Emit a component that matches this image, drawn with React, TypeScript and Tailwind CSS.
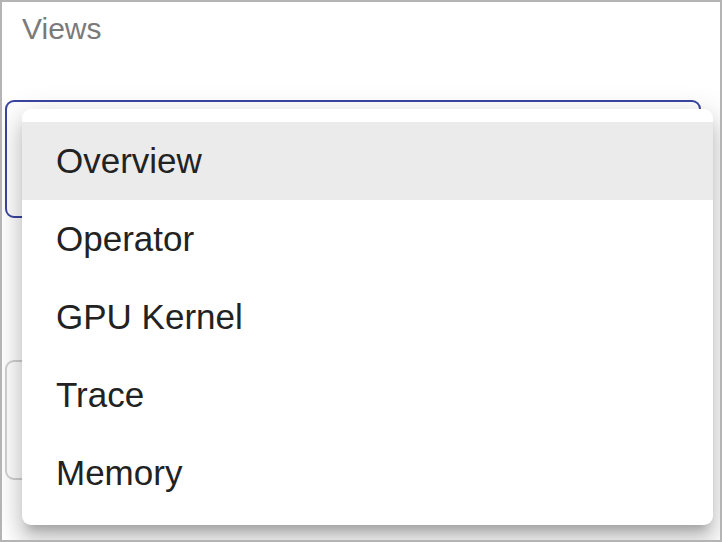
const views = ['Overview', 'Operator', 'GPU Kernel', 'Trace', 'Memory'];

export default function App() {
  const selected = 'Overview';

  return (
    <div
      className="relative w-[722px] h-[542px] overflow-hidden bg-white border-2 border-[#b4b4b4]"
      style={{ fontFamily: '"Liberation Sans", Arial, sans-serif' }}
    >
      <div className="px-[3px] pt-[9px]">
        <div className="pl-[17px] text-[30px] leading-[36px] text-[#7a7a7a]">Views</div>
        <div className="mt-[53px] w-[696px] h-[118px] rounded-[9px] border-[2.5px] border-[#3a45a0]" />
        <div className="mt-[142px] w-[696px] h-[120px] rounded-[9px] border-2 border-[#d2d2d2]" />
      </div>

      {/* open select menu */}
      <div className="absolute left-[20px] top-[107px] w-[691px] rounded-[9px] bg-white py-[13px] shadow-[0_10px_10px_-6px_rgba(0,0,0,0.2),0_16px_20px_2px_rgba(0,0,0,0.14),0_6px_28px_4px_rgba(0,0,0,0.12)]">
        {views.map((v) => (
          <div
            key={v}
            className={`flex items-center h-[78px] pl-[34px] text-[35px] text-[#222222] ${
              v === selected ? 'bg-[#ebebeb]' : ''
            }`}
          >
            {v}
          </div>
        ))}
      </div>
    </div>
  );
}
